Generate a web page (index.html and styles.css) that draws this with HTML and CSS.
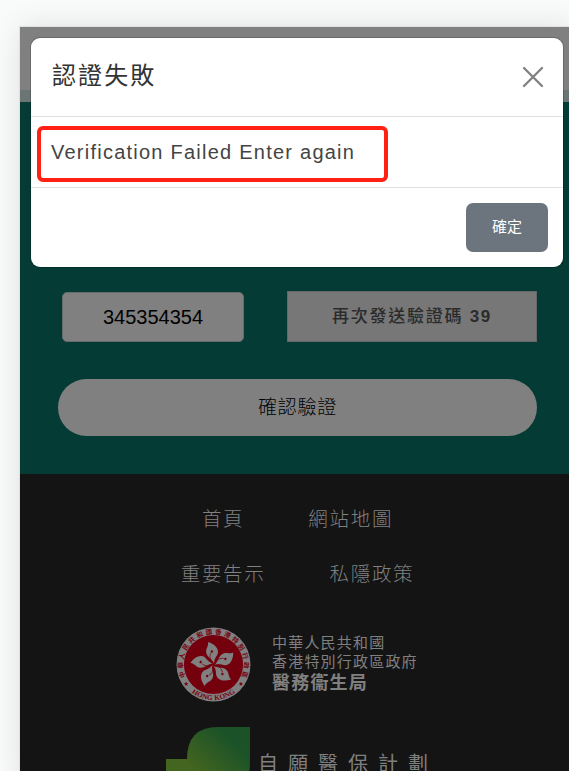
FILE: index.html
```html
<!DOCTYPE html>
<html lang="zh-Hant">
<head>
<meta charset="utf-8">
<title>認證失敗</title>
<link rel="stylesheet" href="styles.css">
</head>
<body>
<div class="page">
  <header class="topbar"></header>
  <main class="verify">
    <div class="code-row">
      <div class="code-input">345354354</div>
      <div class="resend">再次發送驗證碼 <span>39</span></div>
    </div>
    <div class="confirm">確認驗證</div>
  </main>
  <footer class="footer">
    <nav class="links"><a>首頁</a><a>網站地圖</a></nav>
    <nav class="links"><a>重要告示</a><a>私隱政策</a></nav>
    <div class="gov">
      <svg class="emblem" viewBox="-37.5 -37.5 75 75">
        <defs>
          <path id="arc-top" d="M-21.6 21.6A30.5 30.5 0 1 1 21.6 21.6"/>
          <path id="arc-bottom" d="M-25.6 24.7A35.6 35.6 0 0 0 25.6 24.7"/>
          <g id="petal">
            <path fill="#808080" d="M.6 -1C-2 -6-7.5 -8-7.4 -13C-7.3 -16.5-5 -18-5.4 -22.5C.5 -20.5 4.6 -17 4.5 -12.5C4.4 -8.500 .5 -7 .6 -1Z"/>
            <path fill="none" stroke="#75000d" stroke-width=".7" d="M0 -2C-3.500 -5-4.500 -8-2.6 -11.500"/>
            <circle cx="-1.600" cy="-13" r="1.2" fill="#75000d"/>
          </g>
        </defs>
        <circle r="37" fill="#808080"/>
        <circle r="29.6" fill="#75000d"/>
        <use href="#petal"/>
        <use href="#petal" transform="rotate(72)"/>
        <use href="#petal" transform="rotate(144)"/>
        <use href="#petal" transform="rotate(216)"/>
        <use href="#petal" transform="rotate(288)"/>
        <text class="ring-cjk"><textPath href="#arc-top" startOffset="50%" text-anchor="middle" textLength="121">中華人民共和國香港特別行政區</textPath></text>
        <text class="ring-latin"><textPath href="#arc-bottom" startOffset="50%" text-anchor="middle" textLength="47">HONG KONG</textPath></text>
        <path id="star" fill="#75000d" d="M-27.4 17.3l.6 1.3 1.5.1-1.1 1 .3 1.5-1.3-.8-1.3.8.3-1.5-1.1-1 1.5-.1z"/>
        <use href="#star" x="54.8"/>
      </svg>
      <div class="gov-text">
        <div>中華人民共和國</div>
        <div>香港特別行政區政府</div>
        <strong>醫務衞生局</strong>
      </div>
    </div>
    <div class="scheme">
      <svg class="leaf" viewBox="0 0 84 60">
        <defs>
          <linearGradient id="leaf-fill" x1="0" y1="1" x2="1" y2="0">
            <stop offset=".2" stop-color="#43651f"/>
            <stop offset=".75" stop-color="#1b5228"/>
          </linearGradient>
        </defs>
        <path fill="#43651f" d="M0 32h26v28H0z"/>
        <path fill="url(#leaf-fill)" d="M21 60V32Q21 0 52 0H84V36Q84 50 76 60Z"/>
      </svg>
      <div class="scheme-name">自願醫保計劃</div>
    </div>
  </footer>
</div>
<div class="dialog">
  <div class="dialog-head">
    <h2>認證失敗</h2>
    <svg class="close" viewBox="0 0 22 22"><path d="M2 2L20 20M20 2L2 20"/></svg>
  </div>
  <div class="dialog-body">Verification Failed Enter again</div>
  <div class="dialog-foot"><div class="ok">確定</div></div>
  <div class="highlight"></div>
</div>
</body>
</html>
```
FILE: styles.css
```css
* { box-sizing: border-box; }
html, body { height: 100%; overflow: hidden; }
body {
  margin: 0;
  padding: 27px 0 0 20px;
  background: #f9fbfa;
  font-family: "Liberation Sans", "Noto Sans CJK TC", sans-serif;
  position: relative;
}
.page {
  width: 555px;
  height: 760px;
  background: #141414;
  box-shadow: 0 0 0 1px #dfe2e1, 0 0 28px rgba(0, 0, 0, .11);
}
.topbar {
  height: 75px;
  background: #808080;
  border-bottom: 12px solid #6b7674;
}
.verify {
  height: 372px;
  padding: 189px 38px 0;
  background: #043b35;
}
.code-row {
  display: flex;
  align-items: flex-end;
  justify-content: space-between;
  padding-left: 4px;
}
.code-input {
  width: 182px;
  height: 50px;
  border: 1px solid #676b6d;
  border-radius: 5px;
  background: #808080;
  font-size: 20px;
  line-height: 49px;
  text-align: center;
}
.resend {
  width: 250px;
  height: 51px;
  border: 1px solid #666;
  background: #777;
  color: #2b2b2b;
  font-size: 17px;
  font-weight: 500;
  letter-spacing: 1.75px;
  line-height: 49px;
  text-align: center;
}
.resend span { font-weight: 700; }
.confirm {
  height: 57px;
  margin-top: 37px;
  border-radius: 29px;
  background: #808080;
  font-size: 19px;
  font-weight: 300;
  letter-spacing: .8px;
  line-height: 57px;
  text-align: center;
}
.footer {
  padding-top: 31px;
  color: #808080;
}
.links {
  display: flex;
  justify-content: center;
  gap: 64px;
  height: 55px;
  font-size: 19.5px;
  font-weight: 300;
  letter-spacing: 1.7px;
  line-height: 29px;
}
.gov {
  display: flex;
  gap: 21px;
  margin: 12px 0 0 156px;
}
.emblem { width: 75px; height: 75px; }
.ring-cjk {
  font: 700 6.5px "Noto Sans CJK TC", sans-serif;
  fill: #75000d;
}
.ring-latin {
  font: 700 7.2px "Liberation Serif", serif;
  fill: #75000d;
}
.gov-text {
  padding-top: 6px;
  font-size: 15px;
  letter-spacing: 1.2px;
  line-height: 19px;
}
.gov-text strong {
  display: block;
  font-size: 18px;
  line-height: 25px;
}
.scheme {
  display: flex;
  gap: 8px;
  margin: 25px 0 0 146px;
}
.leaf { width: 84px; height: 60px; }
.scheme-name {
  padding-top: 23px;
  font-size: 20px;
  font-weight: 400;
  letter-spacing: 10px;
  line-height: 28px;
  white-space: nowrap;
}
.dialog {
  position: absolute;
  left: 31px;
  top: 38px;
  width: 532px;
  height: 229px;
  border-radius: 9px;
  background: #fff;
  box-shadow: 0 0 0 1px rgba(0, 0, 0, .18);
  color: #444;
}
.dialog-head {
  display: flex;
  align-items: flex-start;
  justify-content: space-between;
  height: 79px;
  padding: 21px 19px 0 21px;
  border-bottom: 1px solid #dee2e6;
}
.dialog-head h2 {
  margin: 0;
  color: #333;
  font-size: 24px;
  font-weight: 400;
  letter-spacing: 2.1px;
  line-height: 34px;
}
.close {
  width: 22px;
  height: 22px;
  margin-top: 7px;
  fill: none;
  stroke: #808080;
  stroke-width: 2.3;
  stroke-linecap: round;
}
.dialog-body {
  height: 71px;
  padding: 19px 20px;
  border-bottom: 1px solid #dee2e6;
  font-size: 20px;
  letter-spacing: 1.24px;
  line-height: 32px;
}
.dialog-foot {
  display: flex;
  justify-content: flex-end;
  padding: 15px;
}
.ok {
  width: 82px;
  height: 49px;
  border-radius: 7px;
  background: #6c757d;
  color: #fff;
  font-size: 15px;
  line-height: 47px;
  text-align: center;
}
.highlight {
  position: absolute;
  left: 6px;
  top: 88px;
  width: 351px;
  height: 56px;
  border: 4px solid #ff2113;
  border-radius: 6px;
}
```
